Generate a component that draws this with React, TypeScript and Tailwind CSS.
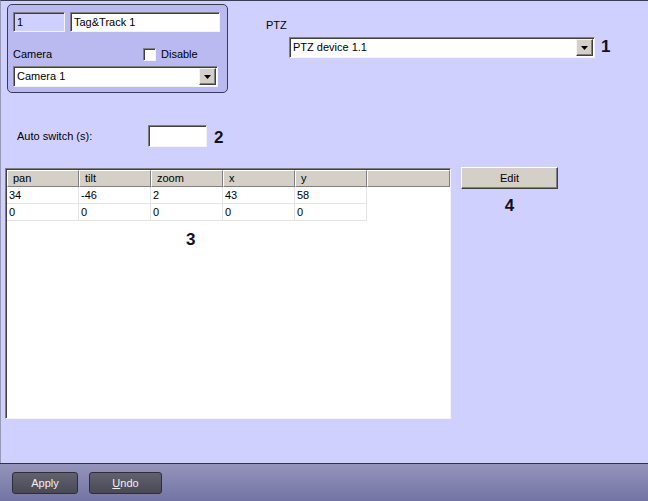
import React from "react";

const sunken =
  "border border-t-[#808080] border-l-[#808080] border-b-[#f4f4f4] border-r-[#f4f4f4] shadow-[inset_1px_1px_0_#404040]";

function DropArrow() {
  return (
    <div className="flex h-full w-[17px] items-center justify-center border border-t-[#f4f4f4] border-l-[#f4f4f4] border-b-[#404040] border-r-[#404040] bg-[#d4d0c8] shadow-[inset_-1px_-1px_0_#808080]">
      <svg width="7" height="4" viewBox="0 0 7 4">
        <path d="M0 0h7L3.5 4z" fill="#000" />
      </svg>
    </div>
  );
}

function Combo({ value, className }: { value: string; className: string }) {
  return (
    <div className={`flex items-stretch bg-white p-[1px] pl-[3px] ${sunken} ${className}`}>
      <div className="flex flex-1 items-center leading-none">{value}</div>
      <DropArrow />
    </div>
  );
}

function Callout({ n, className = "" }: { n: string; className?: string }) {
  return (
    <span className={`text-[17px] font-bold leading-none text-[#101020] ${className}`}>{n}</span>
  );
}

const cols = ["pan", "tilt", "zoom", "x", "y"];
const rows = [
  ["34", "-46", "2", "43", "58"],
  ["0", "0", "0", "0", "0"],
];

export default function App() {
  return (
    <div
      className="flex h-[501px] w-[648px] flex-col overflow-hidden bg-[#d0d0fe] text-[11px] text-black"
      style={{ fontFamily: '"Liberation Sans", Arial, sans-serif' }}
    >
      <div className="flex flex-1 flex-col border-t border-l border-t-[#3c3c50] border-l-[#9898b8]">
        {/* top section */}
        <div className="flex items-start">
          <div className="ml-[6px] mt-[3px] h-[89px] w-[221px] rounded-[5px] border border-[#3a3a58] bg-[#babaf0] px-[5px] pt-[7px]">
            <div className="flex h-[20px] gap-[5px]">
              <div className={`flex w-[52px] items-center bg-[#d0d0fe] pl-[3px] ${sunken}`}>1</div>
              <div className={`flex w-[150px] items-center bg-white pl-[3px] ${sunken}`}>Tag&amp;Track 1</div>
            </div>
            <div className="mt-[10px] flex h-[24px] items-center">
              <span className="w-[130px]">Camera</span>
              <div className={`h-[13px] w-[13px] bg-white ${sunken}`} />
              <span className="ml-[5px]">Disable</span>
            </div>
            <Combo value="Camera 1" className="h-[21px] w-[205px]" />
          </div>

          <div className="ml-[38px] mt-[18px] flex flex-col">
            <span className="leading-[13px]">PTZ</span>
            <div className="ml-[23px] mt-[5px] flex items-center">
              <Combo value="PTZ device 1.1" className="h-[21px] w-[306px]" />
              <Callout n="1" className="ml-[6px] -mt-[3px]" />
            </div>
          </div>
        </div>

        {/* auto switch */}
        <div className="mt-[32px] flex h-[22px] items-center">
          <span className="ml-[16px] w-[131px]">Auto switch (s):</span>
          <div className={`h-[22px] w-[59px] bg-white ${sunken}`} />
          <Callout n="2" className="ml-[7px] mt-[2px]" />
        </div>

        {/* table + edit */}
        <div className="mt-[21px] flex items-start">
          <div className={`relative ml-[4px] h-[251px] w-[446px] bg-white pl-[1px] pt-[1px] ${sunken}`}>
            <div className="flex h-[17px] bg-[#d4d0c8]">
              {cols.map((c) => (
                <div
                  key={c}
                  className="flex w-[72px] items-center border-r border-b border-t border-l border-t-white border-l-white border-r-[#808080] border-b-[#808080] pl-[5px]"
                >
                  {c}
                </div>
              ))}
              <div className="flex-1 border border-t-white border-l-white border-r-[#808080] border-b-[#808080]" />
            </div>
            {rows.map((r, i) => (
              <div key={i} className="flex h-[17px]">
                {r.map((v, j) => (
                  <div key={j} className="flex w-[72px] items-center border-r border-b border-[#e4e4e4] pl-[2px]">
                    {v}
                  </div>
                ))}
              </div>
            ))}
            <Callout n="3" className="absolute left-[180px] top-[62px]" />
          </div>

          <div className="ml-[10px] -mt-[1px] flex flex-col items-center">
            <div className="flex h-[22px] w-[97px] items-center justify-center border border-t-white border-l-white border-b-[#404040] border-r-[#404040] bg-[#d4d0c8] shadow-[inset_-1px_-1px_0_#808080]">
              Edit
            </div>
            <Callout n="4" className="mt-[8px]" />
          </div>
        </div>
      </div>

      {/* bottom bar */}
      <div className="flex h-[38px] items-start gap-[11px] border-t border-[#303048] bg-gradient-to-b from-[#9494bc] to-[#7474a4] pl-[12px] pt-[8px]">
        <div className="flex h-[22px] w-[66px] items-center justify-center rounded-[3px] border border-[#2e2e3a] bg-gradient-to-b from-[#62626f] to-[#4a4a56] text-[#f0f0f0]">
          Apply
        </div>
        <div className="flex h-[22px] w-[73px] items-center justify-center rounded-[3px] border border-[#2e2e3a] bg-gradient-to-b from-[#62626f] to-[#4a4a56] text-[#f0f0f0]">
          <span>
            <span className="underline">U</span>ndo
          </span>
        </div>
      </div>
    </div>
  );
}
